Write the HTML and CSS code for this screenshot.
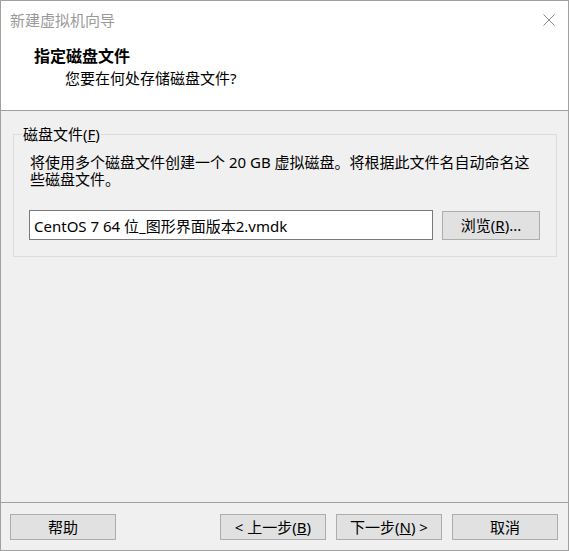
FILE: index.html
```html
<!DOCTYPE html>
<html lang="zh-CN">
<head>
    <meta charset="UTF-8">
    <meta name="viewport" content="width=device-width, initial-scale=1.0">
    <title>新建虚拟机向导</title>
    <link rel="stylesheet" href="styles.css">
</head>
<body>
    <div class="wizard">
        <div class="top">
            <div class="titlebar">
                <span class="title">新建虚拟机向导</span>
                <svg class="close" width="12" height="12" viewBox="0 0 12 12">
                    <path d="M0.5 0.5 L11.5 11.5 M11.5 0.5 L0.5 11.5" stroke="#8a8a8a" stroke-width="1" fill="none"/>
                </svg>
            </div>
            <div class="header">
                <h1>指定磁盘文件</h1>
                <p>您要在何处存储磁盘文件?</p>
            </div>
        </div>
        <div class="main">
            <fieldset class="group">
                <legend>磁盘文件(<u>F</u>)</legend>
                <p class="desc">将使用多个磁盘文件创建一个 20 GB 虚拟磁盘。将根据此文件名自动命名这些磁盘文件。</p>
                <div class="file-row">
                    <input type="text" class="path" value="CentOS 7 64 位_图形界面版本2.vmdk">
                    <button class="btn browse">浏览(<u>R</u>)...</button>
                </div>
            </fieldset>
        </div>
        <div class="footer">
            <button class="btn">帮助</button>
            <span class="spacer"></span>
            <button class="btn">&lt; 上一步(<u>B</u>)</button>
            <button class="btn">下一步(<u>N</u>) &gt;</button>
            <button class="btn">取消</button>
        </div>
    </div>
</body>
</html>
```

FILE: styles.css
```css
*{
    margin: 0;
    padding: 0;
    box-sizing: border-box;
}
body{
    background: #fff;
    color: #000;
    font-family: "Noto Sans", "Noto Sans CJK SC", sans-serif;
    font-size: 15px;
}
.wizard{
    width: 569px;
    height: 551px;
    border: 1px solid #a0a0a0;
    background: #f0f0f0;
    display: flex;
    flex-direction: column;
}
.top{
    background: #fff;
    height: 110px;
    border-bottom: 1px solid #a0a0a0;
}
.titlebar{
    height: 37px;
    display: flex;
    align-items: center;
    justify-content: space-between;
    padding: 0 13px 0 9px;
}
.title{
    font-size: 15px;
    line-height: 20px;
    color: #9a9a9a;
}
.close{
    display: block;
}
.header{
    padding-top: 7px;
}
.header h1{
    font-size: 16px;
    font-weight: bold;
    line-height: 22px;
    padding-left: 33px;
}
.header p{
    font-size: 15px;
    line-height: 22px;
    padding-left: 64px;
}
.main{
    flex: 1;
    padding: 13px 0 0 12px;
}
.group{
    width: 544px;
    border: 1px solid #dcdcdc;
    padding: 10px 15px 16px 16px;
}
.group legend{
    font-size: 15px;
    line-height: 20px;
    padding: 0 1px;
    margin-left: -8px;
}
.desc{
    line-height: 17px;
}
.file-row{
    display: flex;
    align-items: center;
    gap: 9px;
    margin: 22px 0 0 -1px;
}
.path{
    width: 404px;
    height: 30px;
    border: 1px solid #7a7a7a;
    padding: 0 4px;
    font-family: inherit;
    font-size: 15px;
    color: #000;
    background: #fff;
    outline: none;
}
.btn{
    width: 106px;
    height: 26px;
    background: #e1e1e1;
    border: 1px solid #adadad;
    font-family: inherit;
    font-size: 15px;
    line-height: 20px;
    color: #000;
}
.btn.browse{
    width: 98px;
    height: 29px;
}
.footer{
    height: 48px;
    border-top: 1px solid #a0a0a0;
    display: flex;
    align-items: flex-start;
    gap: 10px;
    padding: 11px 10px 0 9px;
}
.spacer{
    flex: 1;
}
```
